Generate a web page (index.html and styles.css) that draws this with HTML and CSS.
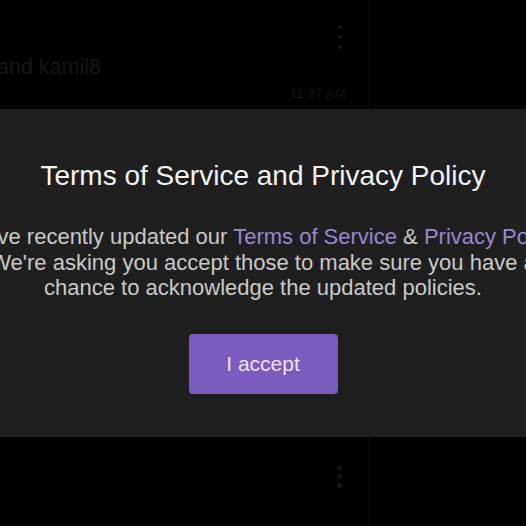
FILE: index.html
```html
<!DOCTYPE html>
<html lang="en">
<head>
<meta charset="utf-8">
<title>Terms of Service</title>
<link rel="stylesheet" href="styles.css">
</head>
<body>
<div class="app">
  <div class="list">
    <div class="conv">
      <div class="conv-top">
        <span class="dots"><i></i><i></i><i></i></span>
      </div>
      <div class="conv-name">and kamil8</div>
      <div class="conv-time">11:27 AM</div>
    </div>
    <div class="conv conv-next">
      <div class="conv-top">
        <span class="dots"><i></i><i></i><i></i></span>
      </div>
    </div>
  </div>
  <div class="side"></div>
</div>

<div class="modal">
  <h1 class="modal-title">Terms of Service and Privacy Policy</h1>
  <p class="modal-text">We've recently updated our <a class="link">Terms of Service</a> &amp; <a class="link">Privacy Policy</a>. We're asking you accept those to make sure you have a chance to acknowledge the updated policies.</p>
  <button class="accept">I accept</button>
</div>
</body>
</html>
```
FILE: styles.css
```css
html, body {
  margin: 0;
  padding: 0;
  width: 526px;
  height: 526px;
  overflow: hidden;
  background: #000;
  font-family: "Liberation Sans", Arial, Helvetica, sans-serif;
}

.app {
  display: flex;
  height: 526px;
}

.list {
  width: 368px;
  border-right: 1px solid #0b0b0b;
  display: flex;
  flex-direction: column;
}

.side {
  flex: 1;
}

.conv {
  display: flex;
  flex-direction: column;
}

.conv-top {
  display: flex;
  justify-content: flex-end;
  padding: 25px 26px 0 0;
  height: 24px;
}

.dots {
  display: flex;
  flex-direction: column;
  gap: 6px;
}

.dots i {
  display: block;
  width: 4px;
  height: 4px;
  border-radius: 50%;
  background: #171717;
}

.conv-name {
  margin: 6px 0 0 -3px;
  font-size: 21.5px;
  line-height: 24px;
  color: #141414;
  white-space: nowrap;
}

.conv-time {
  align-self: flex-end;
  margin: 7px 22px 0 0;
  font-size: 13.5px;
  line-height: 16px;
  color: #121212;
}

.conv-next {
  margin-top: 341px;
}

.conv-next .conv-top {
  padding-top: 22px;
}

.conv-next .dots {
  gap: 4px;
}

.conv-next .dots i {
  width: 5px;
  height: 5px;
  background: #141414;
}

.modal {
  position: absolute;
  left: 0;
  top: 109px;
  width: 526px;
  height: 328px;
  box-sizing: border-box;
  background: #1f1f1f;
  display: flex;
  flex-direction: column;
  align-items: center;
  padding-top: 52px;
}

.modal-title {
  margin: 0;
  font-size: 28px;
  line-height: 30px;
  font-weight: normal;
  color: #f4f4f4;
  white-space: nowrap;
}

.modal-text {
  flex-shrink: 0;
  width: 610px;
  margin: 33px 0 0;
  font-size: 22px;
  line-height: 25.5px;
  color: #c9c9c9;
  text-align: center;
}

.link {
  color: #9b86cf;
}

.accept {
  margin-top: 33px;
  width: 149px;
  height: 60px;
  border: 0;
  border-radius: 4px;
  background: #7a5bbe;
  color: #ebe4f6;
  font-family: "Liberation Sans", Arial, Helvetica, sans-serif;
  font-size: 21px;
}
```
